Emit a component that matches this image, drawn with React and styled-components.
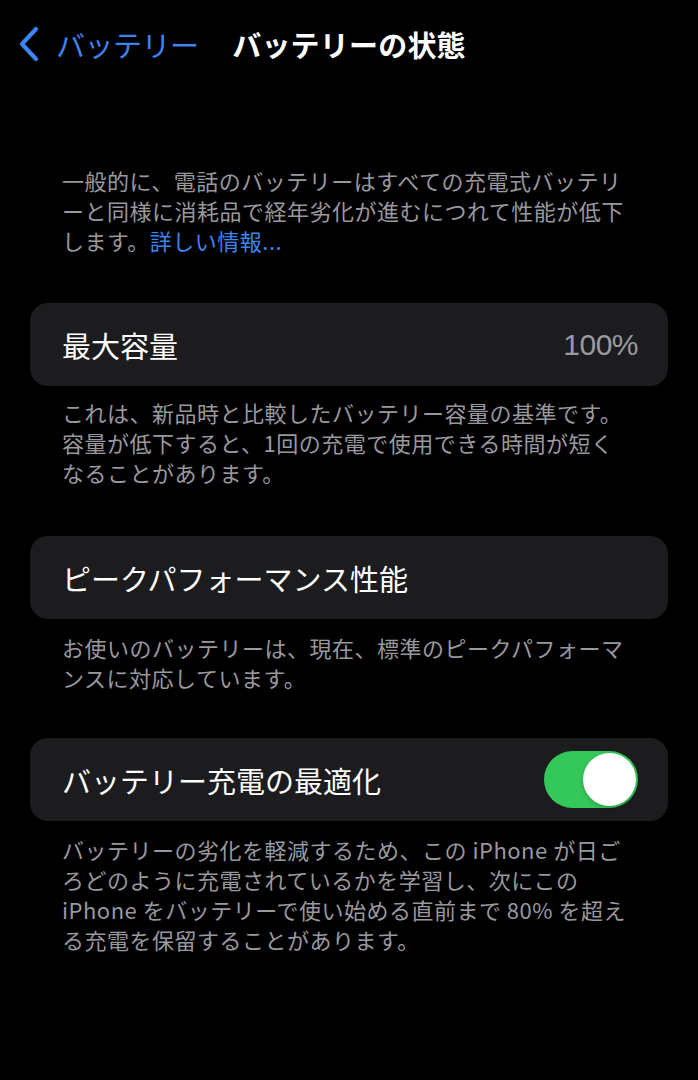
import React from "react";
import styled, { createGlobalStyle } from "styled-components";

const GlobalStyle = createGlobalStyle`
  html, body { margin: 0; padding: 0; background: #000; }
  body { font-family: "Noto Sans CJK JP", "Noto Sans", sans-serif; -webkit-font-smoothing: antialiased; }
`;

const Screen = styled.div`
  width: 698px;
  height: 1080px;
  background: #000;
  color: #fff;
  overflow: hidden;
`;

const NavBar = styled.header`
  display: grid;
  grid-template-columns: 1fr auto 1fr;
  align-items: center;
  height: 46px;
  padding: 21px 18px 0 18px;
`;

const BackButton = styled.div`
  display: flex;
  align-items: center;
  gap: 16px;
  color: #3b84f2;
  font-size: 29px;
  line-height: 1;
  letter-spacing: -0.5px;
`;

const Title = styled.h1`
  margin: 0;
  font-size: 29px;
  font-weight: 700;
  line-height: 1;
  color: #fff;
  letter-spacing: 0.2px;
`;

const Content = styled.main`
  display: flex;
  flex-direction: column;
  padding: 98px 30px 0 30px;
`;

const Note = styled.p`
  margin: ${(p) => p.$mt || 0}px 0 0 0;
  padding: 0 32px;
  font-size: 22px;
  letter-spacing: 0.5px;
  line-height: 30px;
  color: #98989e;
  white-space: nowrap;
`;

const Link = styled.span`
  color: #3b84f2;
`;

const Card = styled.div`
  display: flex;
  align-items: center;
  justify-content: space-between;
  height: 83px;
  box-sizing: border-box;
  margin-top: ${(p) => p.$mt || 0}px;
  padding: 0 30px 0 32px;
  background: #1c1c1e;
  border-radius: 18px;
`;

const Label = styled.span`
  font-size: 29px;
  color: #fff;
  letter-spacing: 0;
`;

const Value = styled.span`
  font-family: "Liberation Sans", "Noto Sans", sans-serif;
  font-size: 30px;
  color: #9a9aa0;
  letter-spacing: -0.5px;
`;

const Toggle = styled.div`
  width: 94px;
  height: 57px;
  border-radius: 29px;
  background: #34c759;
  display: flex;
  align-items: center;
  justify-content: flex-end;
  padding: 2px;
  box-sizing: border-box;
`;

const Knob = styled.div`
  width: 53px;
  height: 53px;
  border-radius: 50%;
  background: #fff;
  box-shadow: 0 2px 4px rgba(0, 0, 0, 0.2);
`;

const Chevron = () => (
  <svg width="22" height="36" viewBox="0 0 22 36" fill="none">
    <path d="M18 3 L4 18 L18 33" stroke="#3b84f2" strokeWidth="4.2" strokeLinecap="round" strokeLinejoin="round" />
  </svg>
);

export default function App() {
  return (
    <Screen>
      <GlobalStyle />
      <NavBar>
        <BackButton>
          <Chevron />
          <span>バッテリー</span>
        </BackButton>
        <Title>バッテリーの状態</Title>
        <div />
      </NavBar>
      <Content>
        <Note>
          一般的に、電話のバッテリーはすべての充電式バッテリ<br />
          ーと同様に消耗品で経年劣化が進むにつれて性能が低下<br />
          します。<Link>詳しい情報...</Link>
        </Note>
        <Card $mt={48}>
          <Label>最大容量</Label>
          <Value>100%</Value>
        </Card>
        <Note $mt={11}>
          これは、新品時と比較したバッテリー容量の基準です。<br />
          容量が低下すると、1回の充電で使用できる時間が短く<br />
          なることがあります。
        </Note>
        <Card $mt={49}>
          <Label>ピークパフォーマンス性能</Label>
        </Card>
        <Note $mt={13}>
          お使いのバッテリーは、現在、標準のピークパフォーマ<br />
          ンスに対応しています。
        </Note>
        <Card $mt={46}>
          <Label>バッテリー充電の最適化</Label>
          <Toggle>
            <Knob />
          </Toggle>
        </Card>
        <Note $mt={13}>
          バッテリーの劣化を軽減するため、この iPhone が日ご<br />
          ろどのように充電されているかを学習し、次にこの<br />
          iPhone をバッテリーで使い始める直前まで 80% を超え<br />
          る充電を保留することがあります。
        </Note>
      </Content>
    </Screen>
  );
}
